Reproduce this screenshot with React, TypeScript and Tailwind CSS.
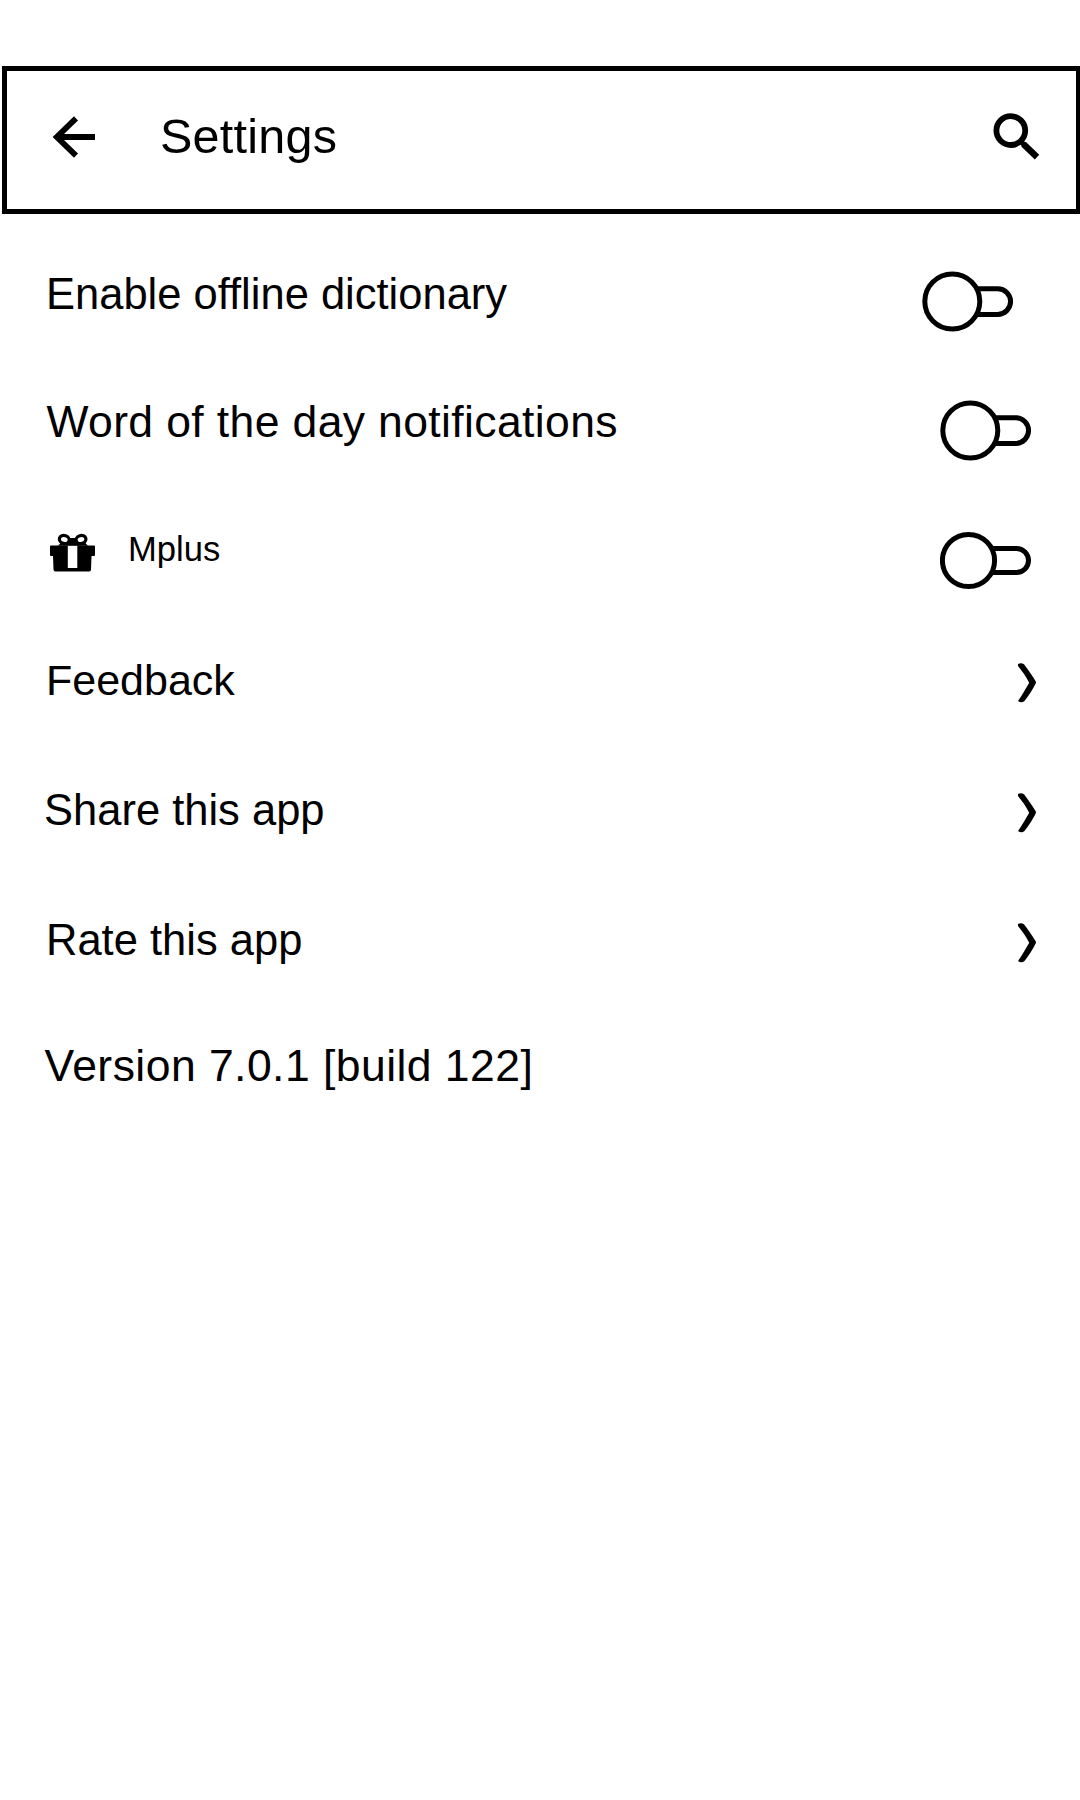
import React from "react";

function BackIcon() {
  return (
    <svg width="44" height="42" viewBox="52 116 44 42" fill="none" stroke="black" strokeWidth="5.8" aria-label="Back">
      <path d="M95 137H57M76 118.300L56.800 137l19.200 18.700" strokeLinejoin="miter" />
    </svg>
  );
}

function SearchIcon() {
  return (
    <svg width="48" height="48" viewBox="992 112.7 48 48" fill="none" stroke="black" aria-label="Search">
      <circle cx="1010.8" cy="130.3" r="14.400" strokeWidth="5.8" />
      <path d="M1020.500 141L1024 144.300" strokeWidth="5" />
      <path d="M1023.500 143.800L1037 156.800" strokeWidth="6.4" />
    </svg>
  );
}

function GiftIcon() {
  return (
    <svg width="46" height="40" viewBox="50 533.5 46 40" aria-hidden="true">
      <path
        fillRule="evenodd"
        d="M50 547q0-1 1-1h43q1 0 1 1v8.500q0 1-1 1h-2.500L91 570q0 2-2 2H55.500q-2 0-2-2L53 556.500H51q-1 0-1-1zM67.800 546.300V568.500H77.300V546.300z"
      />
      <path d="M58 546.300L64 540L71 538.500H75L82 540L88 546.300z" />
      <g fill="white" stroke="black" strokeWidth="3.2">
        <ellipse cx="64.300" cy="540" rx="5" ry="4" transform="rotate(18 64.300 540)" />
        <ellipse cx="81" cy="540" rx="5" ry="4" transform="rotate(-18 81 540)" />
      </g>
    </svg>
  );
}

function Chevron() {
  return (
    <svg width="19" height="40" viewBox="0 0 19 40" aria-hidden="true">
      <path d="M0 1Q3-.800 6 1.200C9.500 6 14 12 17.800 18.500Q18.200 19.500 17.600 20.800C14.500 27 10.500 33 6.500 38Q3.500 40.500 0 38C4.500 31.500 8 25.500 11.200 19.800C8.500 14 4 8 0 3z" />
    </svg>
  );
}

function Toggle({ small = false }: { small?: boolean }) {
  return (
    <svg width="91" height="61" viewBox="0 0 91 61" fill="none" stroke="black" strokeWidth="5" role="switch" aria-checked="false">
      {small ? (
        <>
          <circle cx="28.500" cy="30.500" r="26.100" />
          <path d="M53 18.500H76.500a12 12 0 0 1 0 24H53" />
        </>
      ) : (
        <>
          <circle cx="30.300" cy="30.500" r="27.500" />
          <path d="M56 17.700H75.700a12.800 12.800 0 0 1 0 25.700H56" />
        </>
      )}
    </svg>
  );
}

export default function App() {
  return (
    <main className="h-[1800px] w-[1080px] overflow-hidden bg-white pt-[66px] font-['Liberation_Sans',Arial,sans-serif] whitespace-nowrap text-black">
      <header className="ml-[2px] flex h-[148px] items-center border-[5px] border-r-4 border-black pr-[36px] pb-[6px] pl-[45px]">
        <BackIcon />
        <h1 className="ml-[64px] grow pb-[2px] text-[48.5px] leading-none tracking-[0.25px]">Settings</h1>
        <SearchIcon />
      </header>
      <ul className="mt-[15px]">
        <li className="flex h-[130px] items-center justify-between pr-[67px] pl-[46px] text-[43.5px]">
          <span className="pt-[2px]">Enable offline dictionary</span>
          <div className="mt-[15px]"><Toggle /></div>
        </li>
        <li className="flex h-[125px] items-center justify-between pr-[49px] pl-[46.5px] text-[44.5px] tracking-[0.37px]">
          <span className="pt-[2px]">Word of the day notifications</span>
          <div className="mt-[18px]"><Toggle /></div>
        </li>
        <li className="flex h-[130px] items-center pr-[49px] pl-[50px] text-[34.6px]">
          <div className="mt-[7px]"><GiftIcon /></div>
          <span className="ml-[32px] grow pt-[2px]">Mplus</span>
          <div className="mt-[23px]"><Toggle small /></div>
        </li>
        <li className="flex h-[132px] items-center justify-between pr-[43px] pl-[46px] text-[43px]">
          Feedback
          <div className="mt-[6px]"><Chevron /></div>
        </li>
        <li className="flex h-[127px] items-center justify-between pr-[43px] pl-[44px] text-[43.5px]">
          <span className="pt-[2px]">Share this app</span>
          <div className="mt-[7px]"><Chevron /></div>
        </li>
        <li className="flex h-[133px] items-center justify-between pr-[43px] pl-[46px] text-[43.5px]">
          <span className="pt-[2px]">Rate this app</span>
          <div className="mt-[6px]"><Chevron /></div>
        </li>
        <li className="flex h-[118px] items-center pt-[2px] pl-[44.5px] text-[44.5px] tracking-[0.45px]">Version 7.0.1 [build 122]</li>
      </ul>
    </main>
  );
}
